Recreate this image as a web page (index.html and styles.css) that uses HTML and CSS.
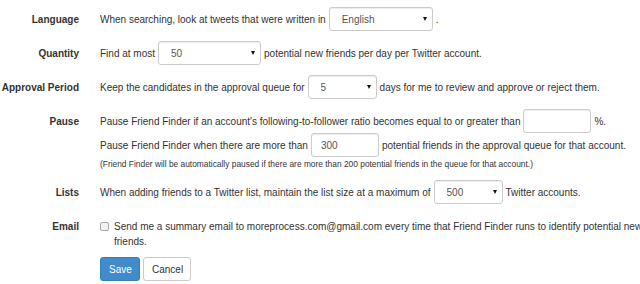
FILE: index.html
```html
<!DOCTYPE html>
<html>
<head>
<meta charset="utf-8">
<link rel="stylesheet" href="styles.css">
</head>
<body>
<form class="form">
  <div class="row">
    <div class="lbl">Language</div>
    <div class="ctl">
      <div class="line">When searching, look at tweets that were written in<span class="sel w104"><select><option>English</option></select></span><span class="after">.</span></div>
    </div>
  </div>
  <div class="row">
    <div class="lbl">Quantity</div>
    <div class="ctl">
      <div class="line">Find at most<span class="sel w103"><select><option>50</option></select></span>potential new friends per day per Twitter account.</div>
    </div>
  </div>
  <div class="row">
    <div class="lbl">Approval Period</div>
    <div class="ctl">
      <div class="line">Keep the candidates in the approval queue for<span class="sel w69"><select><option>5</option></select></span>days for me to review and approve or reject them.</div>
    </div>
  </div>
  <div class="row">
    <div class="lbl">Pause</div>
    <div class="ctl">
      <div class="line">Pause Friend Finder if an account's following-to-follower ratio becomes equal to or greater than<input class="inp" type="text" value=""><span class="after">%.</span></div>
      <div class="line">Pause Friend Finder when there are more than<input class="inp" type="text" value="300">potential friends in the approval queue for that account.</div>
      <div class="note">(Friend Finder will be automatically paused if there are more than 200 potential friends in the queue for that account.)</div>
    </div>
  </div>
  <div class="row">
    <div class="lbl">Lists</div>
    <div class="ctl">
      <div class="line">When adding friends to a Twitter list, maintain the list size at a maximum of<span class="sel w69"><select><option>500</option></select></span>Twitter accounts.</div>
    </div>
  </div>
  <div class="row row-email">
    <div class="lbl lbl-check">Email</div>
    <div class="ctl">
      <label class="check"><input type="checkbox" class="cb"><span>Send me a summary email to moreprocess.com@gmail.com every time that Friend Finder runs to identify potential new friends.</span></label>
    </div>
  </div>
  <div class="row">
    <div class="lbl"></div>
    <div class="ctl buttons">
      <button type="button" class="btn btn-primary">Save</button>
      <button type="button" class="btn btn-default">Cancel</button>
    </div>
  </div>
</form>
</body>
</html>
```
FILE: styles.css
```css
html, body {
  margin: 0;
  padding: 0;
  background: #fff;
}
body {
  font-family: "Liberation Sans", Arial, sans-serif;
  font-size: 10px;
  line-height: 15px;
  color: #333;
  overflow: hidden;
}
.form {
  padding-top: 7px;
}
.row {
  display: flex;
  margin-bottom: 10px;
}
.lbl {
  width: 79px;
  flex: none;
  text-align: right;
  font-weight: bold;
  padding-top: 4.5px;
  margin-right: 21px;
  white-space: nowrap;
  direction: rtl;
}
.ctl {
  flex: 1;
  min-width: 0;
}
.line {
  display: flex;
  align-items: center;
  height: 24px;
  white-space: nowrap;
}
.sel {
  position: relative;
  display: inline-block;
  margin: 0 3px;
  height: 24px;
}
.sel select {
  -webkit-appearance: none;
  appearance: none;
  box-sizing: border-box;
  width: 100%;
  height: 24px;
  border: 1px solid #ccc;
  border-radius: 3px;
  background: #fff;
  color: #555;
  font-family: inherit;
  font-size: 10px;
  padding: 0 0 0 12px;
  margin: 0;
  box-shadow: inset 0 1px 1px rgba(0,0,0,0.075);
}
.sel::after {
  content: "";
  position: absolute;
  right: 6px;
  top: 10px;
  width: 0;
  height: 0;
  border-left: 2.5px solid transparent;
  border-right: 2.5px solid transparent;
  border-top: 4px solid #111;
  pointer-events: none;
}
.w104 { width: 104px; }
.w103 { width: 103px; }
.w69 { width: 69px; }
.after {
  margin-left: 0;
}
.inp {
  box-sizing: border-box;
  width: 68px;
  height: 24px;
  margin: 0 3px;
  border: 1px solid #ccc;
  border-radius: 3px;
  padding: 0 0 0 9px;
  font-family: inherit;
  font-size: 10px;
  color: #555;
  box-shadow: inset 0 1px 1px rgba(0,0,0,0.075);
}
.note {
  font-size: 8.4px;
  line-height: 12px;
  margin-top: 1px;
  white-space: nowrap;
}
.row-email {
  margin-bottom: 8px;
}
.row-email .ctl {
  margin-right: -14px;
}
.lbl-check {
  padding-top: 5px;
}
.check {
  display: block;
  position: relative;
  padding-top: 5px;
  padding-left: 14px;
}
.check .cb {
  -webkit-appearance: none;
  appearance: none;
  position: absolute;
  left: 0;
  top: 8px;
  width: 9px;
  height: 9px;
  margin: 0;
  box-sizing: border-box;
  border: 1px solid #a9a9a9;
  border-radius: 2px;
  background: #f1f1f1;
}
.buttons {
  display: flex;
  gap: 3px;
}
.btn {
  box-sizing: border-box;
  height: 24px;
  font-family: inherit;
  font-size: 10px;
  border-radius: 3px;
  padding: 0 8px;
  margin: 0;
  cursor: pointer;
}
.btn-primary {
  width: 40px;
  background: #428bca;
  border: 1px solid #357ebd;
  color: #fff;
}
.btn-default {
  width: 48px;
  background: #fff;
  border: 1px solid #ccc;
  color: #333;
}
```
